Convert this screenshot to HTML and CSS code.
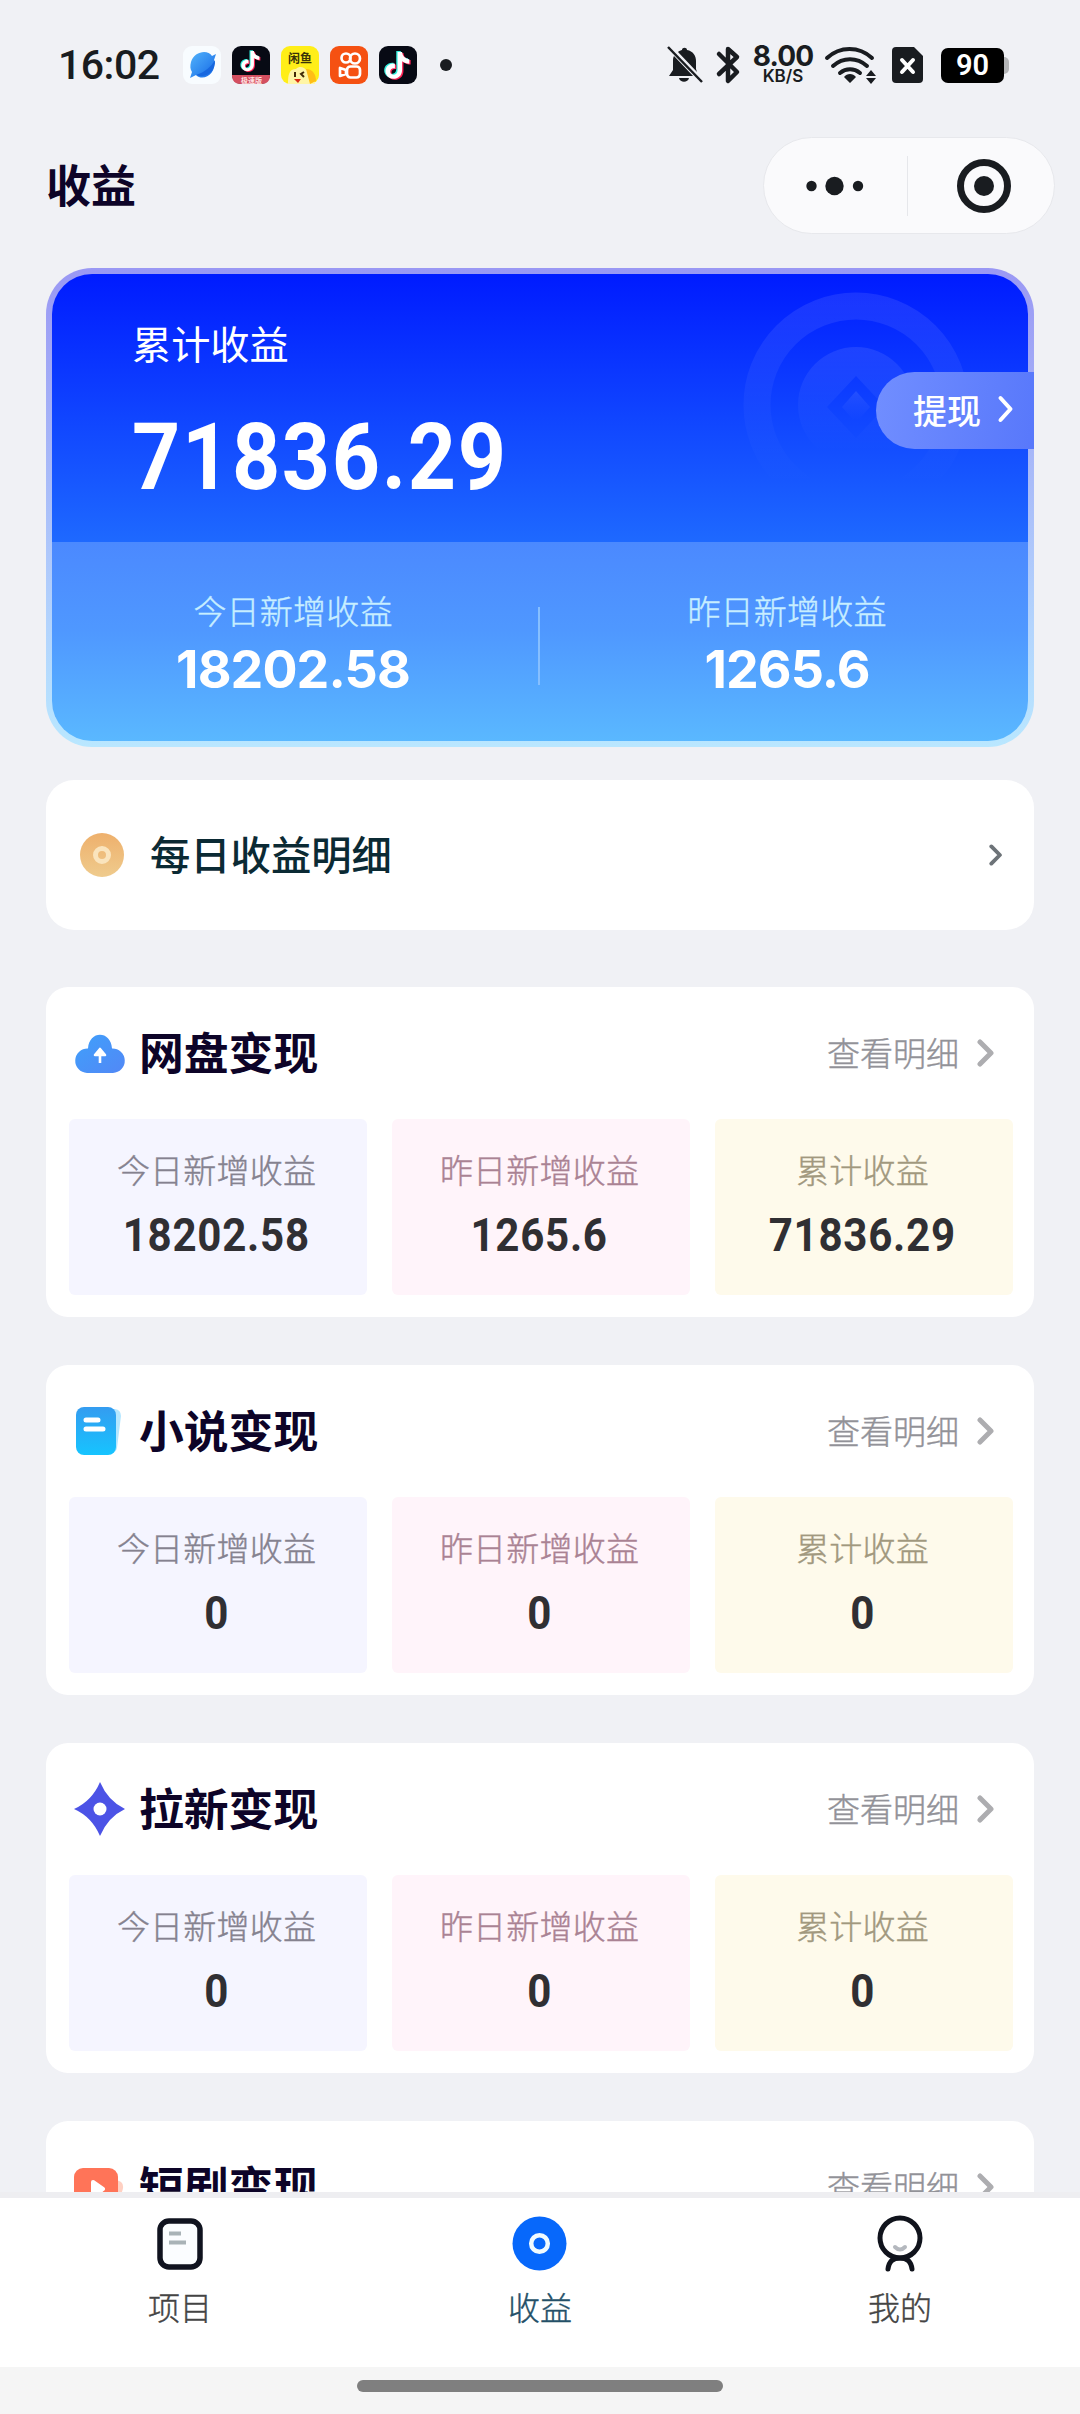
FILE: index.html
```html
<!DOCTYPE html>
<html lang="zh-CN">
<head>
<meta charset="utf-8">
<title>收益</title>
<link rel="stylesheet" href="styles.css">
</head>
<body>
<svg width="0" height="0" class="defs">
  <defs>
    <linearGradient id="planet" x1="0" y1="0" x2="1" y2="1"><stop offset="0" stop-color="#53b4fb"/><stop offset="1" stop-color="#1467e6"/></linearGradient>
    <linearGradient id="coin" x1="0" y1="0" x2="0" y2="1"><stop offset="0" stop-color="#eeb06c"/><stop offset="1" stop-color="#efcb8d"/></linearGradient>
    <linearGradient id="cloud" x1="0" y1="0" x2="1" y2="1"><stop offset="0" stop-color="#3fa0fb"/><stop offset="1" stop-color="#5288f6"/></linearGradient>
    <linearGradient id="book" x1="0" y1="0" x2="0" y2="1"><stop offset="0" stop-color="#349cf0"/><stop offset="1" stop-color="#16c4ff"/></linearGradient>
    <linearGradient id="fade" x1="0" y1="0" x2="0" y2="1"><stop offset="0" stop-color="#fff" stop-opacity=".09"/><stop offset=".45" stop-color="#fff" stop-opacity=".04"/><stop offset=".9" stop-color="#fff" stop-opacity="0"/></linearGradient>
    <path id="note" d="M14 0h5c.4 4.500 3.500 7.500 8 8v5c-3 0-5.800-1-8-2.700V20c0 11.500-15 13-18 4-2-7 4-12 10-11v5.200c-3-.8-5.500 1.200-5.200 4 .6 4.500 8.200 4 8.200-2z"/>
    <symbol id="more" viewBox="0 0 18 28"><path d="M3 3l11 11L3 25" fill="none" stroke="currentColor" stroke-width="5" stroke-linecap="round" stroke-linejoin="round"/></symbol>
  </defs>
</svg>
<header class="status">
  <span class="clock">16:02</span>
  <div class="apps">
    <svg width="38" height="38" viewBox="0 0 38 38"><rect width="38" height="38" rx="9" fill="#f8fcff"/><path d="M8 16C11 5 25 3 29 10l4-2-2 6c3 14-11 22-18 15l-6 3 2-6c-2-3-2-6-1-10z" fill="url(#planet)"/><path d="M32 14c1 12-10 19-19 15 9-3 15-8 19-15z" fill="#1767df"/></svg>
    <svg width="38" height="38" viewBox="0 0 38 38"><rect width="38" height="38" rx="9" fill="#070a14"/><g transform="translate(9 5) scale(.68)"><use href="#note" x="-1.500" y="-1" fill="#3ed"/><use href="#note" x="1.500" y="1" fill="#f25"/><use href="#note" fill="#fff"/></g><path d="M0 29h38c0 6-3 9-9 9H9c-6 0-9-3-9-9z" fill="#d44f60"/><text x="9" y="36.500" class="tiny">极速版</text></svg>
    <svg width="38" height="38" viewBox="0 0 38 38"><rect width="38" height="38" rx="9" fill="#ffee18"/><text x="7" y="17" class="fish">闲鱼</text><path d="M7 38c0-9 1-15 8-15 4-4 9-1 10 1 7 1 8 6 9 14z" fill="#fff5a5"/><path d="M25 23c7 0 10 6 10 12l-6 3z" fill="#ffbe16"/><path d="M14 26v5M23 26l-3 2 3 3" stroke="#432a08" stroke-width="2" fill="none"/><path d="M13 33h7l-3 4z" fill="#d72c14"/></svg>
    <svg width="38" height="38" viewBox="0 0 38 38"><rect width="38" height="38" rx="9" fill="#f55112"/><g fill="none" stroke="#fff" stroke-width="2.700" stroke-linejoin="round"><circle cx="16" cy="12" r="4.500"/><circle cx="25" cy="12.500" r="5"/><rect x="17" y="20.500" width="13" height="11" rx="3.500"/><path d="M16 24l-6-2v8l6-2z"/></g></svg>
    <svg width="38" height="38" viewBox="0 0 38 38"><rect width="38" height="38" rx="9" fill="#070a14"/><g transform="translate(6 6) scale(.9)"><use href="#note" x="-1.500" y="-1" fill="#3ed"/><use href="#note" x="1.500" y="1" fill="#f25"/><use href="#note" fill="#fff"/></g></svg>
  </div>
  <i class="dot"></i>
  <div class="signals">
    <svg width="36" height="38" viewBox="0 0 36 38" fill="#191c20"><path d="M11 6c1-1 3-2 4-2 0-3 5-3 5 0 6 1 9 6 9 11v8l1 3zM7 10l19 20H2l4-6V15c0-2 0-3 1-5zM12 32h10c-1 5-9 5-10 0z"/><path d="M1 1l34 35" stroke="#191c20" stroke-width="2.500"/></svg>
    <svg width="24" height="38" viewBox="0 0 24 38"><path d="M2 8l18 18-9 9V3l9 8L2 28" fill="none" stroke="#191c20" stroke-width="4.500" stroke-linecap="round" stroke-linejoin="round"/></svg>
    <div class="rate"><b>8.00</b><span>KB/S</span></div>
    <svg width="51" height="38" viewBox="0 0 51 38" fill="none"><path d="M2 12c13-12 32-12 45 0M8 20c10-9 24-9 34 0M15 27c6-5 14-5 20 0" stroke="#191c20" stroke-width="4" stroke-linecap="round"/><path d="M19 31c3-4 9-4 12 0l-6 6zM46 24l5 6H41zM41 32h10l-5 6z" fill="#191c20"/></svg>
    <svg width="31" height="38" viewBox="0 0 31 38"><path d="M4 1h18l9 9v23q0 4-4 4H4q-4 0-4-4V5q0-4 4-4z" fill="#191c20"/><path d="M10 14l11 12M21 14L10 26" stroke="#fff" stroke-width="4" stroke-linecap="round"/></svg>
    <div class="battery">90</div>
  </div>
</header>
<div class="titlebar">
  <h1>收益</h1>
  <div class="capsule">
    <svg width="48" height="20" viewBox="0 0 48 20" fill="#191c20"><circle cx="4.500" cy="10" r="5.200"/><circle cx="27.500" cy="10" r="9.200"/><circle cx="51" cy="10" r="5.200"/></svg>
    <i></i>
    <svg width="56" height="56" viewBox="0 0 56 56"><circle cx="28" cy="28" r="23.500" fill="none" stroke="#191c20" stroke-width="7"/><circle cx="28" cy="28" r="10" fill="#191c20"/></svg>
  </div>
</div>
<main>
  <section class="hero">
    <div class="total">
      <svg class="mark" width="226" height="226" viewBox="0 0 226 226"><circle cx="113" cy="113" r="99" fill="none" stroke="url(#fade)" stroke-width="27"/><path fill-rule="evenodd" fill="url(#fade)" d="M113 55a58 58 0 1 1 0 116a58 58 0 1 1 0-116zM113 84l-29 31 29 31 29-31z"/><path d="M113 99l-14 16 14 16 14-16z" fill="url(#fade)"/></svg>
      <p>累计收益</p>
      <strong>71836.29</strong>
      <a class="withdraw">提现<svg width="16" height="28" viewBox="0 0 16 28"><path d="M2.500 3l10 11-10 11" fill="none" stroke="#fff" stroke-width="4" stroke-linecap="round" stroke-linejoin="round"/></svg></a>
    </div>
    <div class="recent">
      <div><span>今日新增收益</span><b>18202.58</b></div>
      <i></i>
      <div><span>昨日新增收益</span><b>1265.6</b></div>
    </div>
  </section>
  <section class="daily">
    <svg width="44" height="44" viewBox="0 0 44 44"><circle cx="22" cy="22" r="22" fill="url(#coin)"/><circle cx="22" cy="22" r="6.500" fill="none" stroke="#fae4bd" stroke-width="5"/></svg>
    <h2>每日收益明细</h2>
    <svg class="arrow" width="14" height="22"><use href="#more"/></svg>
  </section>
  <section class="card">
    <header>
      <svg width="50" height="52" viewBox="0 0 50 52"><path d="M12 46a11.800 11.800 0 0 1 1-24.500C14 3 36 3 37 21.500A11.800 11.800 0 0 1 38 46z" fill="url(#cloud)"/><path d="M25 36V25M20 28l5-6 5 6z" fill="#fff" stroke="#fff" stroke-width="2.600" stroke-linejoin="round"/></svg>
      <h2>网盘变现</h2><a>查看明细</a><svg class="more" width="18" height="28"><use href="#more"/></svg>
    </header>
    <div class="tiles">
      <div><span>今日新增收益</span><b>18202.58</b></div><div><span>昨日新增收益</span><b>1265.6</b></div><div><span>累计收益</span><b>71836.29</b></div>
    </div>
  </section>
  <section class="card">
    <header>
      <svg width="50" height="52" viewBox="0 0 50 52"><path d="M35 4h5q6 1 6 7l-4 32q-1 5-7 6z" fill="#b5e7ff"/><rect x="1" y="2" width="40" height="48" rx="8" fill="url(#book)"/><path d="M11 15h12M11 24h17" stroke="#fff" stroke-width="5" stroke-linecap="round"/></svg>
      <h2>小说变现</h2><a>查看明细</a><svg class="more" width="18" height="28"><use href="#more"/></svg>
    </header>
    <div class="tiles">
      <div><span>今日新增收益</span><b>0</b></div><div><span>昨日新增收益</span><b>0</b></div><div><span>累计收益</span><b>0</b></div>
    </div>
  </section>
  <section class="card">
    <header>
      <svg width="50" height="54" viewBox="0 0 50 54"><path d="M25 0q8 19 25 27-17 8-25 27Q17 35-1 27 17 19 25 0z" fill="#4c53e6"/><circle cx="25" cy="27" r="6.500" fill="#fff"/></svg>
      <h2>拉新变现</h2><a>查看明细</a><svg class="more" width="18" height="28"><use href="#more"/></svg>
    </header>
    <div class="tiles">
      <div><span>今日新增收益</span><b>0</b></div><div><span>昨日新增收益</span><b>0</b></div><div><span>累计收益</span><b>0</b></div>
    </div>
  </section>
  <section class="card">
    <header>
      <svg width="50" height="52" viewBox="0 0 50 52"><path d="M40 19q9 1 8 8t-8 13z" fill="#ffd0c2"/><rect x="-1" y="7" width="44" height="40" rx="9" fill="#ff7458"/><path d="M18 21l10 7-10 8z" fill="#fff" stroke="#fff" stroke-width="4" stroke-linejoin="round"/></svg>
      <h2>短剧变现</h2><a>查看明细</a><svg class="more" width="18" height="28"><use href="#more"/></svg>
    </header>
  </section>
</main>
<nav>
  <a><svg width="58" height="58" viewBox="0 0 58 58"><rect x="9" y="6" width="40" height="46" rx="9" fill="#fbfdff" stroke="#10131f" stroke-width="5.500"/><path d="M18 18.500h12M18 27.500h17" stroke="#a9b3b7" stroke-width="4"/></svg>项目</a>
  <a class="on"><svg width="58" height="58" viewBox="0 0 58 58"><circle cx="28.500" cy="28.500" r="27" fill="#0768fb"/><circle cx="28.500" cy="28.500" r="8.300" fill="none" stroke="#f0fbff" stroke-width="4.500"/></svg>收益</a>
  <a><svg width="58" height="58" viewBox="0 0 58 58" fill="none" stroke="#10131c" stroke-width="5" stroke-linecap="round"><circle cx="29" cy="23" r="20"/><path d="M17 54c1-8 5-11 12-11s11 3 12 11"/><path d="M24 32q5 5 10 0" stroke="#b4b8be" stroke-width="4"/></svg>我的</a>
</nav>
<footer><i></i></footer>
</body>
</html>
```
FILE: styles.css
```css
* { box-sizing: border-box; margin: 0; padding: 0; }
body {
  width: 1080px;
  height: 2414px;
  overflow: hidden;
  display: flex;
  flex-direction: column;
  background: #f0f1f5;
  font-family: "Noto Sans CJK SC", sans-serif;
}
svg { display: block; flex: none; overflow: visible; }
.defs { position: absolute; }

.status { height: 130px; padding: 0 71px 0 58px; display: flex; align-items: center; flex: none; color: #191c20; }
.clock { width: 125px; font: 500 41px/48px Roboto, sans-serif; letter-spacing: -.5px; }
.apps { display: flex; gap: 11px; }
.tiny { font: 700 7px "Noto Sans CJK SC", sans-serif; fill: #ffe2e2; }
.fish { font: 700 12px "Noto Sans CJK SC", sans-serif; fill: #3b3408; }
.dot { width: 12px; height: 12px; margin-left: 23px; border-radius: 50%; background: #191c20; }
.signals { margin-left: auto; display: flex; align-items: center; }
.signals > svg:nth-child(2) { margin: 0 12px 0 14px; }
.rate { width: 60px; display: flex; flex-direction: column; align-items: center; font-family: Inter, sans-serif; }
.rate b { font-size: 28px; line-height: 23px; letter-spacing: -.8px; }
.rate span { font-size: 17px; font-weight: 600; line-height: 17px; }
.signals > svg:nth-child(4) { margin: 0 16px 0 12px; }
.battery {
  width: 63px; height: 35px; margin: 0 5px 0 18px; border-radius: 7px;
  background: #000; color: #fff; text-align: center;
  font: 600 29px/35px Roboto, sans-serif; position: relative;
}
.battery::after { content: ""; position: absolute; left: 63px; top: 9px; width: 5px; height: 17px; border-radius: 0 5px 5px 0; background: #b4b5b7; }

.titlebar { height: 138px; padding: 7px 25px 0 46px; display: flex; justify-content: space-between; flex: none; }
h1 { height: 96px; color: #0d0428; font-size: 45px; line-height: 94px; font-weight: 700; }
.capsule { width: 292px; height: 97px; padding: 0 42px 0 43px; border: 1px solid #e7e8ec; border-radius: 49px; background: #fafafc; display: flex; align-items: center; }
.capsule i { flex: none; width: 1px; height: 60px; margin: 0 48px 0 52px; background: #e6e7eb; }

main { height: 1924px; padding: 0 46px; overflow: hidden; flex: none; }
.hero { height: 479px; padding: 6px; border-radius: 46px; background: linear-gradient(#9a98f4, #a9bcf9 45%, #b3d4fd 75%, #b9e7ff); color: #fff; }
.total { height: 268px; padding: 40px 0 0 80px; position: relative; border-radius: 40px 40px 0 0; background: linear-gradient(#001bff, #1e69ff); }
.total p { font-size: 39.200px; line-height: 56px; }
.total strong { display: inline-block; margin-top: 34px; font: 700 92px/108px Roboto, sans-serif; transform: scaleX(.915); transform-origin: left; letter-spacing: 1.800px; }
.mark { position: absolute; left: 691px; top: 18px; }
.withdraw { position: absolute; right: -6px; top: 98px; width: 158px; height: 77px; padding: 0 20px 3px 37px; display: flex; align-items: center; justify-content: space-between; border-radius: 39px 0 0 39px; background: linear-gradient(100deg, #718eff, #5878fb); font-size: 34px; font-weight: 500; }
.recent { height: 199px; display: grid; grid-template-columns: 1fr 2px 1fr; border-radius: 0 0 40px 40px; background: linear-gradient(#4b89ff, #4f98ff 45%, #5ab8ff); }
.recent > div { display: flex; flex-direction: column; align-items: center; padding-top: 44px; }
.recent > div:first-child { padding-right: 5px; }
.recent > div:last-child { padding-left: 5px; }
.recent i { height: 78px; margin: 65px 1px 0 -1px; background: #86bfff; }
.recent span { font-size: 33px; line-height: 48px; font-weight: 300; letter-spacing: .2px; color: #c7eeff; -webkit-text-stroke: .4px; }
.recent b { margin-top: 5px; font: 700 52px/62px Inter, sans-serif; letter-spacing: -.9px; }

.daily { height: 150px; margin-top: 33px; padding: 0 31px 0 34px; display: flex; align-items: center; border-radius: 28px; background: #fff; }
.daily h2 { margin: -5px 0 0 26px; font-size: 40.300px; line-height: 56px; font-weight: 500; color: #0b2a34; }
.arrow { margin-left: auto; color: #6d7378; }

.card { height: 330px; margin-bottom: 48px; padding: 0 21px 0 23px; border-radius: 22px; background: #fff; overflow: hidden; }
.daily + .card { margin-top: 57px; }
.card header { height: 132px; padding: 0 18px 0 6px; display: flex; align-items: center; }
.card h2 { margin: -4px auto 0 14px; font-size: 44.800px; line-height: 64px; font-weight: 700; color: #0d0428; }
.card a { margin-top: -3px; font-size: 33px; line-height: 48px; font-weight: 300; color: #929298; -webkit-text-stroke: .4px; }
.more { margin-left: 18px; color: #adadb0; }
.tiles { display: grid; grid-template-columns: repeat(3, 1fr); gap: 25px; }
.tiles div { height: 176px; padding: 26px 3px 0 0; display: flex; flex-direction: column; align-items: center; border-radius: 6px; background: #f5f5ff; color: #85828f; }
.tiles div:nth-child(2) { background: #fff4fa; color: #aa8293; }
.tiles div:nth-child(3) { background: #fefaeb; color: #a1987e; }
.tiles span { font-size: 33px; line-height: 48px; font-weight: 300; letter-spacing: .2px; -webkit-text-stroke: .4px; }
.tiles b { margin-top: 15px; font: 700 46px/54px Roboto, sans-serif; transform: scaleX(.915); color: #302f33; letter-spacing: .8px; }

nav { height: 175px; border-top: 6px solid #eeeef1; background: #fff; display: grid; grid-template-columns: repeat(3, 1fr); flex: none; }
nav a { padding-top: 17px; display: flex; flex-direction: column; align-items: center; font-size: 32px; line-height: 46px; font-weight: 300; color: #444; -webkit-text-stroke: .4px; }
nav svg { margin-bottom: 10px; }
nav .on { color: #245068; }
footer { height: 47px; padding-top: 13px; background: #f5f5f5; flex: none; }
footer i { display: block; width: 366px; height: 12px; margin: 0 auto; border-radius: 6px; background: #7f7f7f; }
```
